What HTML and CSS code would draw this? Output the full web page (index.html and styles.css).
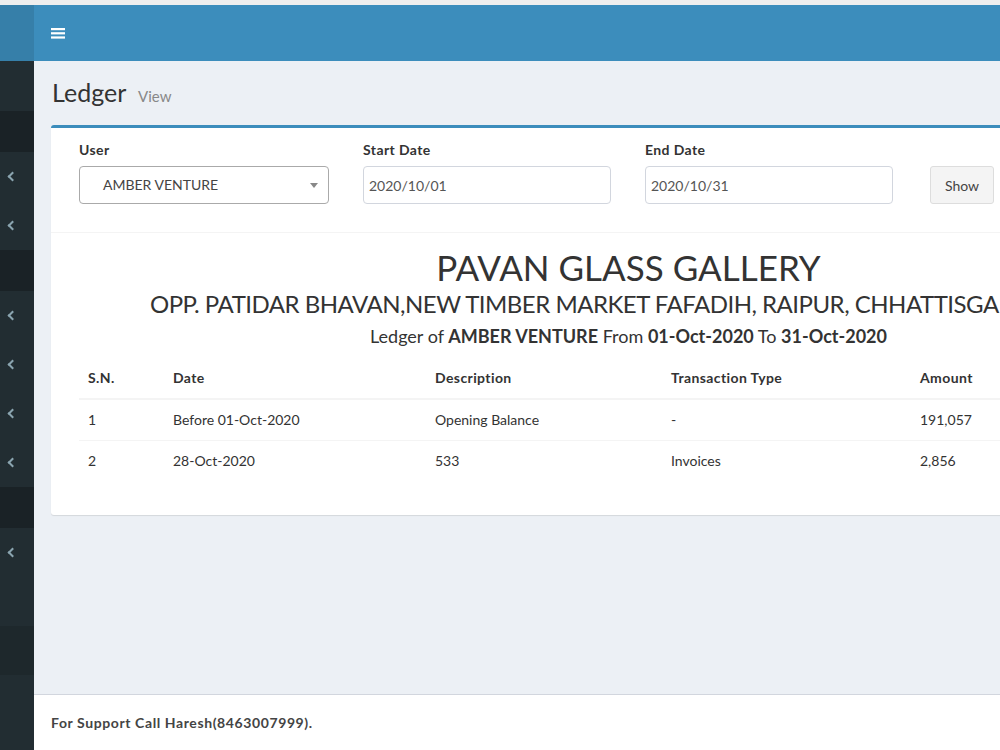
FILE: index.html
```html
<!DOCTYPE html>
<html lang="en">
<head>
  <meta charset="UTF-8" />
  <meta name="viewport" content="width=device-width, initial-scale=1.0"/>
  <title>Ledger - Pavan Glass Gallery</title>
  <link rel="stylesheet" href="styles.css">
</head>
<body>
  <div class="top-strip"></div>

  <header class="main-header">
    <div class="logo"></div>
    <nav class="navbar">
      <button class="sidebar-toggle" aria-label="Toggle navigation">
        <svg width="14" height="11" viewBox="0 0 14 11"><rect y="0" width="14" height="2.2" fill="#fff"/><rect y="4.2" width="14" height="2.2" fill="#fff"/><rect y="8.4" width="14" height="2.2" fill="#fff"/></svg>
      </button>
    </nav>
  </header>

  <div class="wrapper">
    <aside class="sidebar">
      <div class="user-panel"></div>
      <div class="menu-header"></div>
      <div class="menu-item"><span class="angle"></span></div>
      <div class="menu-item"><span class="angle"></span></div>
      <div class="menu-header"></div>
      <div class="menu-item"><span class="angle"></span></div>
      <div class="menu-item"><span class="angle"></span></div>
      <div class="menu-item"><span class="angle"></span></div>
      <div class="menu-item"><span class="angle"></span></div>
      <div class="menu-header"></div>
      <div class="menu-item"><span class="angle"></span></div>
      <div class="menu-item"></div>
      <div class="menu-item active"></div>
    </aside>

    <div class="content-wrapper">
      <section class="content">
        <h1 class="page-title">Ledger <small>View</small></h1>

        <div class="box">
          <form class="filter-form">
            <div class="form-group">
              <label>User</label>
              <div class="select">
                <span>AMBER VENTURE</span>
                <b class="caret"></b>
              </div>
            </div>
            <div class="form-group">
              <label for="start">Start Date</label>
              <input type="text" id="start" class="form-control" value="2020/10/01" />
            </div>
            <div class="form-group">
              <label for="end">End Date</label>
              <input type="text" id="end" class="form-control" value="2020/10/31" />
            </div>
            <div class="form-group">
              <label>&nbsp;</label>
              <button type="button" class="btn">Show</button>
            </div>
          </form>

          <div class="report">
            <h2 class="firm-name">PAVAN GLASS GALLERY</h2>
            <h3 class="firm-address">OPP. PATIDAR BHAVAN,NEW TIMBER MARKET FAFADIH, RAIPUR, CHHATTISGARH</h3>
            <h4 class="report-title">Ledger of <strong>AMBER VENTURE</strong> From <strong>01-Oct-2020</strong> To <strong>31-Oct-2020</strong></h4>

            <table class="table">
              <thead>
                <tr>
                  <th class="col-sn">S.N.</th>
                  <th class="col-date">Date</th>
                  <th class="col-desc">Description</th>
                  <th class="col-type">Transaction Type</th>
                  <th>Amount</th>
                </tr>
              </thead>
              <tbody>
                <tr>
                  <td>1</td>
                  <td>Before 01-Oct-2020</td>
                  <td>Opening Balance</td>
                  <td>-</td>
                  <td>191,057</td>
                </tr>
                <tr>
                  <td>2</td>
                  <td>28-Oct-2020</td>
                  <td>533</td>
                  <td>Invoices</td>
                  <td>2,856</td>
                </tr>
              </tbody>
            </table>
          </div>
        </div>
      </section>

      <footer class="main-footer">
        <strong>For Support Call Haresh(8463007999).</strong>
      </footer>
    </div>
  </div>
</body>
</html>
```

FILE: styles.css
```css
body {
  font-family: 'Lato', 'Liberation Sans', sans-serif;
  font-size: 14px;
  line-height: 20px;
  color: #333;
  margin: 0;
  padding: 0;
  height: 750px;
  overflow: hidden;
  background-color: #ecf0f5;
}

.top-strip {
  height: 5px;
  background-color: #eeeeee;
}

/* header */
.main-header {
  display: flex;
  height: 56px;
}

.logo {
  width: 34px;
  background-color: #367fa9;
}

.navbar {
  flex: 1;
  display: flex;
  align-items: center;
  background-color: #3c8dbc;
}

.sidebar-toggle {
  background: none;
  border: none;
  padding: 0 0 0 17px;
  display: flex;
  cursor: pointer;
}

/* layout */
.wrapper {
  display: flex;
  height: 689px;
}

.sidebar {
  width: 34px;
  flex-shrink: 0;
  background-color: #222d32;
}

.user-panel {
  height: 50px;
}

.menu-header {
  height: 41px;
  background-color: #1a2226;
}

.menu-item {
  height: 49px;
  display: flex;
  align-items: center;
}

.menu-item.active {
  background-color: #1e282c;
}

.angle {
  width: 5px;
  height: 5px;
  margin-left: 9px;
  border-left: 2px solid #8aa4af;
  border-bottom: 2px solid #8aa4af;
  transform: rotate(45deg);
}

.content-wrapper {
  flex: 1;
  display: flex;
  flex-direction: column;
  min-width: 0;
  overflow: hidden;
}

.content {
  flex: 1;
  padding: 16px 0 0 17px;
}

.page-title {
  margin: 0 0 0 1px;
  font-size: 25px;
  font-weight: 400;
  line-height: 30px;
  color: #333;
}

.page-title small {
  font-size: 15px;
  color: #888;
  padding-left: 6px;
}

/* box */
.box {
  width: 1155px;
  margin-top: 14px;
  background: #fff;
  border-top: 3px solid #3c8dbc;
  border-radius: 3px;
  box-shadow: 0 1px 1px rgba(0,0,0,0.1);
  padding-bottom: 34px;
}

.filter-form {
  display: grid;
  grid-template-columns: 284px 282px 284px 283px;
  padding: 12px 28px 28px;
  border-bottom: 1px solid #f4f4f4;
}

.form-group label {
  display: block;
  font-weight: 700;
  letter-spacing: 0.4px;
  margin-bottom: 6px;
  color: #333;
}

.select {
  width: 250px;
  height: 38px;
  box-sizing: border-box;
  border: 1px solid #aaa;
  border-radius: 4px;
  display: flex;
  align-items: center;
  justify-content: space-between;
  padding: 0 10px 0 23px;
  color: #444;
}

.caret {
  border-top: 5px solid #888;
  border-left: 4px solid transparent;
  border-right: 4px solid transparent;
}

.form-control {
  width: 248px;
  height: 38px;
  box-sizing: border-box;
  border: 1px solid #d2d6de;
  border-radius: 4px;
  padding: 6px 5px;
  font-family: inherit;
  font-size: 14px;
  color: #555;
}

.btn {
  height: 38px;
  width: 64px;
  margin-left: 1px;
  background-color: #f4f4f4;
  border: 1px solid #ddd;
  border-radius: 3px;
  color: #444;
  font-family: inherit;
  font-size: 14px;
  cursor: pointer;
}

/* report */
.report {
  text-align: center;
  padding-top: 14px;
}

.firm-name {
  margin: 0;
  font-size: 35px;
  font-weight: 400;
  line-height: 40px;
  color: #333;
}

.firm-address {
  margin: 1px 0 0;
  padding-right: 76px;
  font-size: 24px;
  font-weight: 400;
  line-height: 32px;
  letter-spacing: -0.5px;
  white-space: nowrap;
  color: #333;
}

.report-title {
  margin: 1px 0 0;
  font-size: 18px;
  font-weight: 400;
  line-height: 30px;
  color: #333;
}

.table {
  width: calc(100% - 56px);
  margin: 7px 28px 0;
  border-collapse: collapse;
  text-align: left;
}

.table th,
.table td {
  padding: 10px 9px;
  line-height: 20px;
}

.table th {
  font-weight: 700;
  letter-spacing: 0.4px;
  border-bottom: 2px solid #f4f4f4;
}

.table td {
  border-top: 1px solid #f4f4f4;
}

.col-sn { width: 67px; }
.col-date { width: 244px; }
.col-desc { width: 218px; }
.col-type { width: 231px; }

/* footer */
.main-footer {
  background: #fff;
  border-top: 1px solid #d2d6de;
  height: 56px;
  box-sizing: border-box;
  padding: 18px 17px 0;
  color: #444;
  letter-spacing: 0.6px;
}
```
